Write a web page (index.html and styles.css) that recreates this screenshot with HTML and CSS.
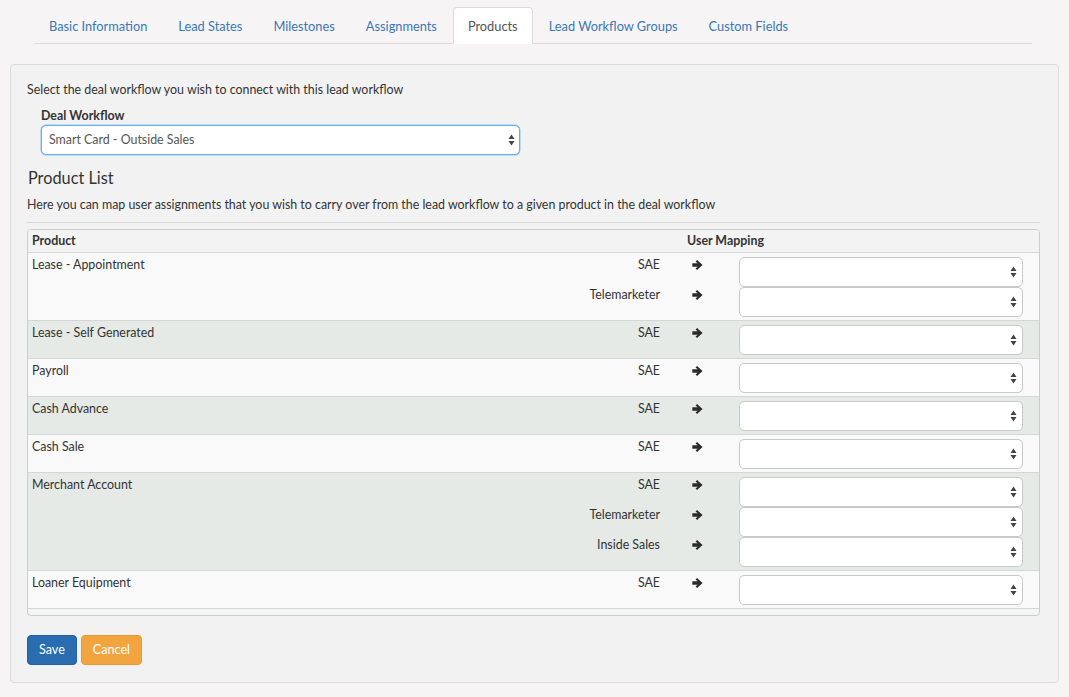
FILE: index.html
```html
<!DOCTYPE html>
<html>
<head>
<meta charset="utf-8">
<link rel="stylesheet" href="styles.css">
</head>
<body>
<ul class="tabs">
  <li><a>Basic Information</a></li>
  <li><a>Lead States</a></li>
  <li><a>Milestones</a></li>
  <li><a>Assignments</a></li>
  <li class="active"><a>Products</a></li>
  <li><a>Lead Workflow Groups</a></li>
  <li><a>Custom Fields</a></li>
</ul>

<div class="panel">
  <p class="intro">Select the deal workflow you wish to connect with this lead workflow</p>
  <div class="form-group">
    <label class="field-label">Deal Workflow</label>
    <div class="select main-select">
      <span class="select-text">Smart Card - Outside Sales</span>
      <svg class="updown" width="7" height="12" viewBox="0 0 7 12"><path d="M3.5 0.5L6.5 5H0.5z M0.5 7H6.5L3.5 11.5z" fill="#444"/></svg>
    </div>
  </div>

  <h3 class="section-title">Product List</h3>
  <p class="desc">Here you can map user assignments that you wish to carry over from the lead workflow to a given product in the deal workflow</p>
  <hr class="rule">

  <div class="table">
    <div class="thead">
      <div class="th th-product">Product</div>
      <div class="th th-mapping">User Mapping</div>
    </div>

    <div class="group odd">
      <div class="product">Lease - Appointment</div>
      <div class="role">SAE</div>
      <div class="arrow"><svg width="11" height="10" viewBox="0 0 12 11"><path d="M0.3 3.7H6.1L3.9 1.6L5.5 0L11.6 5.5L5.5 11L3.9 9.4L6.1 7.3H0.3z" fill="#2b2b2b"/></svg></div>
      <div class="select"><svg class="updown" width="7" height="12" viewBox="0 0 7 12"><path d="M3.5 0.5L6.5 5H0.5z M0.5 7H6.5L3.5 11.5z" fill="#444"/></svg></div>
      <div class="role">Telemarketer</div>
      <div class="arrow"><svg width="11" height="10" viewBox="0 0 12 11"><path d="M0.3 3.7H6.1L3.9 1.6L5.5 0L11.6 5.5L5.5 11L3.9 9.4L6.1 7.3H0.3z" fill="#2b2b2b"/></svg></div>
      <div class="select"><svg class="updown" width="7" height="12" viewBox="0 0 7 12"><path d="M3.5 0.5L6.5 5H0.5z M0.5 7H6.5L3.5 11.5z" fill="#444"/></svg></div>
    </div>

    <div class="group even">
      <div class="product">Lease - Self Generated</div>
      <div class="role">SAE</div>
      <div class="arrow"><svg width="11" height="10" viewBox="0 0 12 11"><path d="M0.3 3.7H6.1L3.9 1.6L5.5 0L11.6 5.5L5.5 11L3.9 9.4L6.1 7.3H0.3z" fill="#2b2b2b"/></svg></div>
      <div class="select"><svg class="updown" width="7" height="12" viewBox="0 0 7 12"><path d="M3.5 0.5L6.5 5H0.5z M0.5 7H6.5L3.5 11.5z" fill="#444"/></svg></div>
    </div>

    <div class="group odd">
      <div class="product">Payroll</div>
      <div class="role">SAE</div>
      <div class="arrow"><svg width="11" height="10" viewBox="0 0 12 11"><path d="M0.3 3.7H6.1L3.9 1.6L5.5 0L11.6 5.5L5.5 11L3.9 9.4L6.1 7.3H0.3z" fill="#2b2b2b"/></svg></div>
      <div class="select"><svg class="updown" width="7" height="12" viewBox="0 0 7 12"><path d="M3.5 0.5L6.5 5H0.5z M0.5 7H6.5L3.5 11.5z" fill="#444"/></svg></div>
    </div>

    <div class="group even">
      <div class="product">Cash Advance</div>
      <div class="role">SAE</div>
      <div class="arrow"><svg width="11" height="10" viewBox="0 0 12 11"><path d="M0.3 3.7H6.1L3.9 1.6L5.5 0L11.6 5.5L5.5 11L3.9 9.4L6.1 7.3H0.3z" fill="#2b2b2b"/></svg></div>
      <div class="select"><svg class="updown" width="7" height="12" viewBox="0 0 7 12"><path d="M3.5 0.5L6.5 5H0.5z M0.5 7H6.5L3.5 11.5z" fill="#444"/></svg></div>
    </div>

    <div class="group odd">
      <div class="product">Cash Sale</div>
      <div class="role">SAE</div>
      <div class="arrow"><svg width="11" height="10" viewBox="0 0 12 11"><path d="M0.3 3.7H6.1L3.9 1.6L5.5 0L11.6 5.5L5.5 11L3.9 9.4L6.1 7.3H0.3z" fill="#2b2b2b"/></svg></div>
      <div class="select"><svg class="updown" width="7" height="12" viewBox="0 0 7 12"><path d="M3.5 0.5L6.5 5H0.5z M0.5 7H6.5L3.5 11.5z" fill="#444"/></svg></div>
    </div>

    <div class="group even">
      <div class="product">Merchant Account</div>
      <div class="role">SAE</div>
      <div class="arrow"><svg width="11" height="10" viewBox="0 0 12 11"><path d="M0.3 3.7H6.1L3.9 1.6L5.5 0L11.6 5.5L5.5 11L3.9 9.4L6.1 7.3H0.3z" fill="#2b2b2b"/></svg></div>
      <div class="select"><svg class="updown" width="7" height="12" viewBox="0 0 7 12"><path d="M3.5 0.5L6.5 5H0.5z M0.5 7H6.5L3.5 11.5z" fill="#444"/></svg></div>
      <div class="role">Telemarketer</div>
      <div class="arrow"><svg width="11" height="10" viewBox="0 0 12 11"><path d="M0.3 3.7H6.1L3.9 1.6L5.5 0L11.6 5.5L5.5 11L3.9 9.4L6.1 7.3H0.3z" fill="#2b2b2b"/></svg></div>
      <div class="select"><svg class="updown" width="7" height="12" viewBox="0 0 7 12"><path d="M3.5 0.5L6.5 5H0.5z M0.5 7H6.5L3.5 11.5z" fill="#444"/></svg></div>
      <div class="role">Inside Sales</div>
      <div class="arrow"><svg width="11" height="10" viewBox="0 0 12 11"><path d="M0.3 3.7H6.1L3.9 1.6L5.5 0L11.6 5.5L5.5 11L3.9 9.4L6.1 7.3H0.3z" fill="#2b2b2b"/></svg></div>
      <div class="select"><svg class="updown" width="7" height="12" viewBox="0 0 7 12"><path d="M3.5 0.5L6.5 5H0.5z M0.5 7H6.5L3.5 11.5z" fill="#444"/></svg></div>
    </div>

    <div class="group odd last">
      <div class="product">Loaner Equipment</div>
      <div class="role">SAE</div>
      <div class="arrow"><svg width="11" height="10" viewBox="0 0 12 11"><path d="M0.3 3.7H6.1L3.9 1.6L5.5 0L11.6 5.5L5.5 11L3.9 9.4L6.1 7.3H0.3z" fill="#2b2b2b"/></svg></div>
      <div class="select"><svg class="updown" width="7" height="12" viewBox="0 0 7 12"><path d="M3.5 0.5L6.5 5H0.5z M0.5 7H6.5L3.5 11.5z" fill="#444"/></svg></div>
    </div>
  </div>

  <div class="actions">
    <button class="btn btn-save">Save</button>
    <button class="btn btn-cancel">Cancel</button>
  </div>
</div>
</body>
</html>
```

FILE: styles.css
```css
* { box-sizing: border-box; }

body {
  margin: 0;
  background: #f6f4f5;
  font-family: Lato, "Open Sans", "Liberation Sans", sans-serif;
  font-size: 12.4px;
  line-height: 18px;
  color: #333;
}

.tabs {
  list-style: none;
  margin: 0 37px 0 34px;
  padding: 7px 0 0;
  display: flex;
  border-bottom: 1px solid #dcdcdc;
  font-size: 12.8px;
}

.tabs li {
  margin-right: 1px;
  margin-bottom: -1px;
}

.tabs a {
  display: block;
  padding: 9px 14px 8px;
  line-height: 18px;
  border: 1px solid transparent;
  border-radius: 4px 4px 0 0;
  color: #3a78b5;
}

.tabs .active a {
  background: #fff;
  color: #555;
  border-color: #dcdcdc #dcdcdc transparent;
}

.panel {
  margin: 20px 10px 0;
  background: #f2f2f2;
  border: 1px solid #dcdcdc;
  border-radius: 4px;
  padding: 16px 18px 17px 16px;
}

.intro {
  margin: 0;
}

.form-group {
  margin-top: 8px;
  padding-left: 14px;
}

.field-label {
  display: block;
  font-weight: 700;
  margin-bottom: 0;
}

.select {
  position: relative;
  height: 30px;
  background: #fff;
  border: 1px solid #c8c8c8;
  border-radius: 5px;
  display: flex;
  align-items: center;
  justify-content: space-between;
  padding: 0 5px 0 7px;
}

.main-select {
  width: 479px;
  border-color: #6aaeea;
  box-shadow: 0 0 0 0.5px #8fc2ef;
  padding-right: 4px;
}

.select-text {
  color: #555;
}

.updown {
  display: block;
}

.group .select .updown {
  margin-left: auto;
}

.section-title {
  margin: 13px 0 0;
  font-size: 16.3px;
  font-weight: 400;
  line-height: 20px;
  padding-left: 1px;
}

.desc {
  margin: 8px 0 0;
}

.rule {
  margin: 8px 0 6px;
  border: 0;
  border-top: 1px solid #d8d8d8;
  height: 0;
}

.table {
  border: 1px solid #cbcdcd;
  border-radius: 4px;
  background: #f5f5f5;
  padding-bottom: 6px;
  overflow: hidden;
}

.thead,
.group {
  display: grid;
  grid-template-columns: 1fr auto 79px 284px;
  padding-right: 16px;
}

.thead {
  background: #f3f3f3;
  height: 22px;
}

.th {
  font-weight: 700;
  line-height: 22px;
}

.th-product {
  padding-left: 4px;
}

.th-mapping {
  grid-column: 3 / span 2;
  padding-left: 27px;
}

.group {
  border-top: 1px solid #d3d7d7;
  padding-top: 4px;
  padding-bottom: 3px;
}

.group.last {
  border-bottom: 1px solid #d3d7d7;
}

.odd { background: #f9f9f9; }
.even { background: #e5eae6; }

.product {
  grid-column: 1;
  grid-row: 1;
  padding-left: 4px;
  margin-top: -1px;
  align-self: start;
}

.role {
  grid-column: 2;
  text-align: right;
  margin-top: -1px;
  align-self: start;
}

.arrow {
  grid-column: 3;
  padding-left: 32px;
  padding-top: 3px;
  align-self: start;
}

.arrow svg { display: block; }

.group .select {
  grid-column: 4;
}

.actions {
  margin-top: 19px;
  display: flex;
  gap: 4px;
}

.btn {
  height: 30px;
  padding: 0 11px;
  font-family: inherit;
  font-size: 12.6px;
  line-height: 28px;
  color: #fff;
  border: 1px solid transparent;
  border-radius: 4px;
}

.btn-save {
  background: #296db0;
  border-color: #255f9c;
}

.btn-cancel {
  background: #f2a53f;
  border-color: #eb9a2f;
}
```
